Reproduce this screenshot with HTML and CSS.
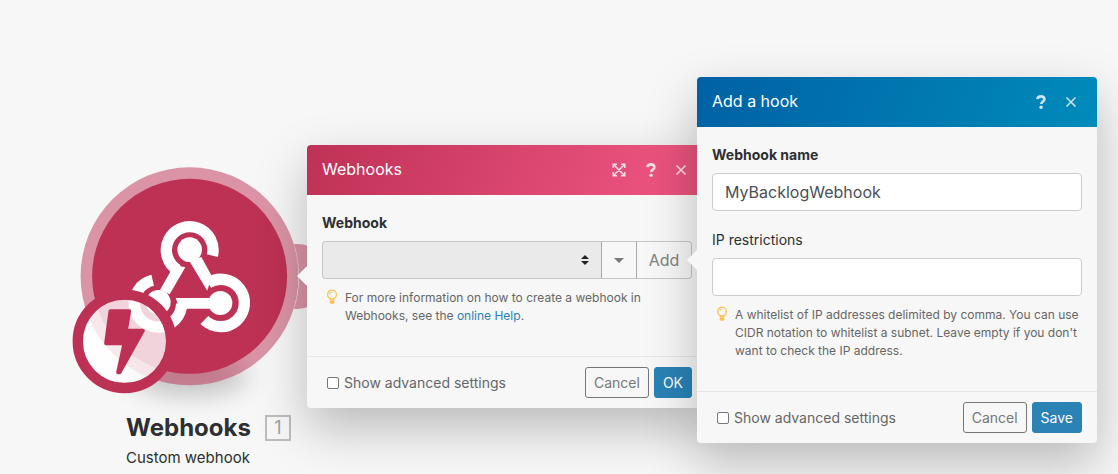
FILE: index.html
```html
<!DOCTYPE html>
<html lang="en">
<head>
<meta charset="utf-8">
<title>Webhooks</title>
<link rel="stylesheet" href="styles.css">
</head>
<body>
<svg class="sprite" aria-hidden="true">
  <symbol id="bulb" viewBox="0 0 12 16">
    <circle cx="6" cy="5.6" r="4.4" fill="none" stroke="currentColor" stroke-width="1.3"/>
    <path d="M3.6 9.2 4.6 11.2h2.8l1-2" fill="none" stroke="currentColor" stroke-width="1.2"/>
    <path d="M3.6 5.4A2.3 2.3 0 0 1 5.8 3.2" fill="none" stroke="currentColor" stroke-width="1"/>
    <path d="M3.6 12h4.8v1.6l-1 1.2H4.6l-1-1.2z" fill="currentColor"/>
  </symbol>
  <symbol id="cross" viewBox="0 0 12 12">
    <path d="M1.5 1.5l9 9M10.5 1.5l-9 9" stroke="currentColor" stroke-width="1.5" fill="none"/>
  </symbol>
  <symbol id="question" viewBox="0 0 10 14">
    <path d="M1.4 4.2C1.6 2.4 3 1.4 5 1.4c2.1 0 3.4 1 3.4 2.8 0 2.2-3.1 2.3-3.1 4.7" fill="none" stroke="currentColor" stroke-width="2.6"/>
    <circle cx="5.1" cy="12.3" r="1.7" fill="currentColor"/>
  </symbol>
  <symbol id="expand" viewBox="0 0 14 14">
    <path d="M1.2 5V1.2H5M9 1.2h3.8V5M12.8 9v3.8H9M5 12.8H1.2V9M1.5 1.5l11 11M12.5 1.5l-11 11" fill="none" stroke="currentColor" stroke-width="1.5"/>
  </symbol>
</svg>

<main class="canvas">
  <section class="node">
    <svg class="node-art" viewBox="0 0 260 260" role="img" aria-label="Custom webhook module">
      <defs>
        <filter id="soft" x="-60%" y="-150%" width="220%" height="400%"><feGaussianBlur stdDeviation="13"/></filter>
      </defs>
      <ellipse cx="130" cy="220" rx="58" ry="20" fill="#000" opacity=".22" filter="url(#soft)"/>
      <g fill="#bd3155">
        <path opacity=".5" d="M234 89h3a32.500 32.500 0 0 1 0 65h-3a109 109 0 0 0 0-65z"/>
        <circle cx="129.600" cy="121.300" r="109" opacity=".5"/>
        <circle cx="129.600" cy="121.300" r="97.500"/>
      </g>
      <g transform="scale(.33333)">
        <g fill="none" stroke="#fff" stroke-width="34">
          <path d="M457 302A70 70 0 1 0 353 345"/>
          <path d="M433 495A71 71 0 1 0 444 384"/>
          <path d="M278 376A71 71 0 1 0 365 446"/>
        </g>
        <g fill="#fff">
          <circle cx="389" cy="284" r="37"/>
          <circle cx="481" cy="444" r="36"/>
          <circle cx="295" cy="442" r="37"/>
          <path d="M376 337 329 418 300 405 331 350 345 330z"/>
          <path d="M424 306 455 362 442 407 388 318z"/>
          <path d="M347 429H452V461H381L362 470z"/>
        </g>
      </g>
      <circle cx="64.500" cy="186.300" r="42" fill="#fff" opacity=".79"/>
      <circle cx="64.500" cy="186.300" r="46.700" fill="none" stroke="#bd3155" stroke-width="10.400"/>
      <path transform="scale(.33333)" d="M151 468H208L198 527H249L179 652H174L193 565H138z" fill="#bd3155" stroke="#bd3155" stroke-width="11" stroke-linejoin="round"/>
    </svg>
    <div class="node-caption">
      <h1 class="node-title">Webhooks <span class="node-count">1</span></h1>
      <p class="node-subtitle">Custom webhook</p>
    </div>
  </section>

  <form class="panel panel-module">
    <header class="panel-header">
      <h2 class="panel-title">Webhooks</h2>
      <button class="icon-button icon-button-wide" type="button" aria-label="Expand"><svg class="icon-expand"><use href="#expand"/></svg></button>
      <button class="icon-button" type="button" aria-label="Help"><svg class="icon-question"><use href="#question"/></svg></button>
      <button class="icon-button" type="button" aria-label="Close"><svg class="icon-cross"><use href="#cross"/></svg></button>
    </header>
    <div class="panel-body">
      <div class="field">
        <label class="label label-required" for="webhook">Webhook</label>
        <div class="input-group">
          <div class="select-wrap">
            <select class="select" id="webhook"><option></option></select>
            <svg class="select-arrows" viewBox="0 0 8 10" aria-hidden="true"><path d="M4 0 8 4H0zM4 10 0 6h8z" fill="#222"/></svg>
          </div>
          <button class="group-button group-caret" type="button" aria-label="More options"><svg class="caret" viewBox="0 0 10 5"><path d="M0 0h10L5 5z" fill="#777"/></svg></button>
          <button class="group-button group-add" type="button">Add</button>
        </div>
        <div class="help">
          <svg class="bulb" aria-hidden="true"><use href="#bulb"/></svg>
          <p class="help-text">For more information on how to create a webhook in Webhooks, see the <a class="link" href="#help">online Help</a>.</p>
        </div>
      </div>
    </div>
    <footer class="panel-footer">
      <label class="check"><input class="checkbox" type="checkbox">Show advanced settings</label>
      <button class="button button-outline" type="button">Cancel</button>
      <button class="button button-primary" type="button">OK</button>
    </footer>
  </form>

  <form class="panel panel-hook">
    <header class="panel-header">
      <h2 class="panel-title">Add a hook</h2>
      <button class="icon-button" type="button" aria-label="Help"><svg class="icon-question"><use href="#question"/></svg></button>
      <button class="icon-button" type="button" aria-label="Close"><svg class="icon-cross"><use href="#cross"/></svg></button>
    </header>
    <div class="panel-body">
      <div class="field">
        <label class="label label-required" for="name">Webhook name</label>
        <input class="input" id="name" type="text" value="MyBacklogWebhook">
      </div>
      <div class="field">
        <label class="label" for="ip">IP restrictions</label>
        <input class="input" id="ip" type="text">
        <div class="help">
          <svg class="bulb" aria-hidden="true"><use href="#bulb"/></svg>
          <p class="help-text">A whitelist of IP addresses delimited by comma. You can use CIDR notation to whitelist a subnet. Leave empty if you don't want to check the IP address.</p>
        </div>
      </div>
    </div>
    <footer class="panel-footer">
      <label class="check"><input class="checkbox" type="checkbox">Show advanced settings</label>
      <button class="button button-outline" type="button">Cancel</button>
      <button class="button button-primary" type="button">Save</button>
    </footer>
  </form>
</main>
</body>
</html>
```

FILE: styles.css
```css
* {
  box-sizing: border-box;
}

body {
  margin: 0;
  background: #f7f7f7;
  color: #2d2f31;
  font: 14px/21px Inter, "Liberation Sans", sans-serif;
}

button,
input,
select {
  font: inherit;
}

h1,
h2,
p {
  margin: 0;
}

.sprite {
  position: absolute;
  width: 0;
  height: 0;
}

.canvas {
  position: relative;
  min-height: 100vh;
  overflow: hidden;
}

/* Module on the canvas */
.node {
  position: absolute;
  left: 60px;
  top: 155px;
  width: 260px;
}

.node-art {
  display: block;
  width: 100%;
  overflow: visible;
}

.node-caption {
  padding-left: 66px;
}

.node-title {
  display: flex;
  align-items: center;
  gap: 14px;
  height: 26px;
  font-size: 24px;
  line-height: 26px;
  font-weight: 700;
}

.node-count {
  width: 26px;
  border: 2px solid #bdbdbd;
  color: #a0a0a0;
  font-size: 18px;
  line-height: 22px;
  font-weight: 400;
  text-align: center;
}

.node-subtitle {
  margin-top: 6px;
  font-size: 15px;
}

/* Floating windows */
.panel {
  position: absolute;
  width: 400px;
  border-radius: 4px;
  background: #f7f7f7;
  box-shadow: 0 20px 50px rgba(0, 0, 0, .25);
}

.panel-module {
  left: 307px;
  top: 145px;
}

.panel-hook {
  left: 697px;
  top: 77px;
}

.panel::before {
  content: "";
  position: absolute;
  right: 100%;
  border: 10px solid transparent;
  border-left-width: 0;
  border-right-color: #f7f7f7;
}

.panel-module::before {
  top: 121px;
}

.panel-hook::before {
  top: 173px;
}

.panel-header {
  display: flex;
  align-items: center;
  height: 50px;
  padding: 0 11px 0 15px;
  border-radius: 4px 4px 0 0;
  color: #fff;
}

.panel-module .panel-header {
  background: linear-gradient(110deg, #bf3156, #e9527d 85%);
}

.panel-hook .panel-header {
  background: linear-gradient(110deg, #0061a4, #008bbb);
}

.panel-title {
  flex: 1;
  padding-bottom: 2px;
  font-size: 16px;
  font-weight: 400;
}

.icon-button {
  display: flex;
  align-items: center;
  justify-content: center;
  width: 30px;
  height: 30px;
  padding: 0;
  border: 0;
  background: none;
  color: rgba(255, 255, 255, .8);
}

.icon-button-wide {
  width: 34px;
}

.icon-expand {
  width: 14px;
  height: 14px;
}

.icon-question {
  width: 10px;
  height: 14px;
}

.icon-cross {
  width: 12px;
  height: 12px;
}

.panel-body {
  display: flex;
  flex-direction: column;
  gap: 18px;
  padding: 17px 15px 31px;
}

.label {
  display: block;
  margin-bottom: 8px;
}

.label-required {
  font-weight: 700;
}

.input {
  display: block;
  width: 100%;
  height: 38px;
  padding: 0 12px;
  border: 1px solid #ccc;
  border-radius: 4px;
  background: #fff;
  color: #495057;
  font-size: 16px;
}

.input-group {
  display: flex;
  height: 38px;
}

.select-wrap {
  position: relative;
  flex: 1;
}

.select {
  appearance: none;
  width: 100%;
  height: 100%;
  border: 1px solid #c6c6c6;
  border-right-color: #aaa;
  border-radius: 4px 0 0 4px;
  background: #eaeaea;
}

.select-arrows {
  position: absolute;
  top: 14px;
  right: 13px;
  width: 8px;
  height: 10px;
}

.group-button {
  padding: 0;
  border: 1px solid #c6c6c6;
  border-left: 0;
  background: none;
  color: #808080;
  font-size: 16px;
}

.group-caret {
  width: 35px;
  border-right-color: #aaa;
}

.group-add {
  width: 55px;
  border-radius: 0 4px 4px 0;
}

.caret {
  display: block;
  width: 10px;
  height: 5px;
  margin: 0 auto;
}

.help {
  display: flex;
  gap: 7px;
  margin-top: 10px;
  padding-left: 4px;
}

.bulb {
  flex: none;
  width: 12px;
  height: 16px;
  color: #fcc251;
}

.help-text {
  color: #666;
  font-size: 12px;
  line-height: 18px;
}

.link {
  color: #2a82b5;
  text-decoration: none;
}

.panel-footer {
  display: flex;
  align-items: center;
  gap: 5px;
  padding: 10px 15px;
  border-top: 1px solid #e6e6e6;
}

.check {
  display: flex;
  flex: 1;
  align-items: center;
  gap: 5px;
  padding-left: 5px;
  color: #666;
}

.checkbox {
  appearance: none;
  width: 12px;
  height: 12px;
  margin: 0;
  border: 1px solid #777;
  border-radius: 2px;
  background: #fff;
}

.button {
  height: 31px;
  padding: 0 8px;
  border: 1px solid #777;
  border-radius: 3px;
  background: none;
  color: #777;
}

.button-primary {
  border-color: #2a82b5;
  background: #2a82b5;
  color: #fff;
}
```
